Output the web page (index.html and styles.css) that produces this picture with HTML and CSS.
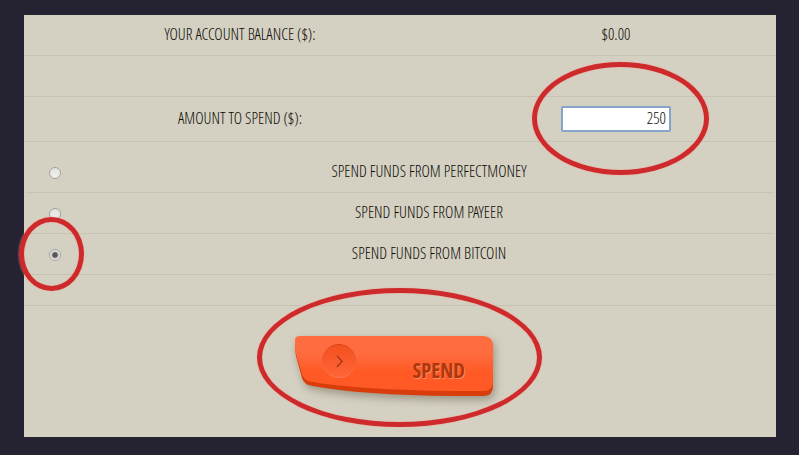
FILE: index.html
```
<!DOCTYPE html>
<html lang="en">
<head>
  <meta charset="UTF-8">
  <meta name="viewport" content="width=device-width, initial-scale=1.0">
  <title>Make a Spend</title>
  <link rel="stylesheet" href="styles.css">
</head>
<body>
  <form class="deposit">
    <!-- Balance and amount -->
    <div class="row">
      <span class="cell-label">Your account balance ($):</span>
      <span class="cell-value">$0.00</span>
    </div>
    <div class="row"></div>
    <div class="row row-amount">
      <label class="cell-label" for="amount">Amount to spend ($):</label>
      <div class="cell-value">
        <div class="amount-box">
          <input type="text" id="amount" name="amount" class="amount-input" value="250">
          <span class="ring ring-amount"></span>
        </div>
      </div>
    </div>

    <!-- Payment source -->
    <div class="sources">
      <div class="row">
        <div class="cell-radio"><input type="radio" class="radio" id="perfectmoney" name="source"></div>
        <label class="cell-source" for="perfectmoney">Spend funds from PerfectMoney</label>
      </div>
      <div class="row">
        <div class="cell-radio"><input type="radio" class="radio" id="payeer" name="source"></div>
        <label class="cell-source" for="payeer">Spend funds from Payeer</label>
      </div>
      <div class="row">
        <div class="cell-radio">
          <div class="radio-box">
            <input type="radio" class="radio" id="bitcoin" name="source" checked>
            <span class="ring ring-radio"></span>
          </div>
        </div>
        <label class="cell-source" for="bitcoin">Spend funds from Bitcoin</label>
      </div>
    </div>
    <div class="row row-short"></div>

    <div class="actions">
      <div class="submit-box">
        <button type="submit" class="submit">
          <svg class="submit-shape" viewBox="0 0 198 60" aria-hidden="true">
            <defs>
              <linearGradient id="face" x1="0" y1="0" x2="0" y2="1">
                <stop offset="0" stop-color="#ff6c40"/>
                <stop offset="0.3" stop-color="#ff6c40"/>
                <stop offset="0.65" stop-color="#ff5a26"/>
                <stop offset="1" stop-color="#ff5a26"/>
              </linearGradient>
              <linearGradient id="dial" x1="0" y1="0" x2="0" y2="1">
                <stop offset="0" stop-color="#f5501f"/>
                <stop offset="1" stop-color="#ff6538"/>
              </linearGradient>
              <linearGradient id="rim" x1="0" y1="0" x2="0" y2="1">
                <stop offset="0" stop-color="#d94314"/>
                <stop offset="1" stop-color="#ff7850"/>
              </linearGradient>
            </defs>
            <path fill="#d93d0c" d="M0 8 Q0 5 5 5 H190 Q198 5 198 13 V50 Q198 60 188 60 H160 Q65 59 18 50 Q9 49 7 42 L1 20 Q0 14 0 8Z"/>
            <path fill="url(#face)" d="M0 4 Q0 0 5 0 H188 Q198 0 198 10 V45 Q198 55 188 55 H160 Q65 54 18 46 Q9 45 7 38 L1 18 Q0 14 0 9Z"/>
            <circle cx="44" cy="25" r="16.5" fill="url(#dial)" stroke="url(#rim)"/>
            <path d="M42 21 L47 26 L42 31" fill="none" stroke="#ff7d56" stroke-width="1.5"/>
            <path d="M42 20 L47 25.500 L42 31" fill="none" stroke="#a9330c" stroke-width="1.5"/>
          </svg>
          <span class="submit-text">Spend</span>
        </button>
        <span class="ring ring-submit"></span>
      </div>
    </div>
  </form>
</body>
</html>
```
FILE: styles.css
```
* {
  box-sizing: border-box;
}

body {
  margin: 0;
  padding: 15px 23px 18px 24px;
  background: #252331;
  color: #0c0b06;
  font-family: "Open Sans Condensed Light", "Open Sans Condensed", "Roboto Condensed", sans-serif;
  font-size: 16px;
  font-weight: 300;
  line-height: 20px;
}

.deposit {
  background: #d5d1c2;
  text-transform: uppercase;
  padding-bottom: 41px;
}

.row {
  display: flex;
  align-items: center;
  min-height: 41px;
  padding-bottom: 2px;
  border-bottom: 1px solid #c8c4b5;
}

.row-amount {
  min-height: 45px;
}

.row-short {
  min-height: 31px;
}

.cell-label,
.cell-value,
.cell-source {
  text-align: center;
}

.cell-label {
  flex: 27;
}

.cell-value {
  flex: 20;
}

.sources {
  padding: 10px 2px 0;
}

.cell-radio {
  display: flex;
  justify-content: center;
  width: 58px;
}

.cell-source {
  flex: 1;
}

.amount-box,
.radio-box,
.submit-box {
  display: inline-block;
  position: relative;
  vertical-align: middle;
}

.amount-box {
  margin-top: 2px;
}

.amount-input {
  display: block;
  width: 110px;
  height: 26px;
  padding: 0 3px 2px;
  border: 2px solid #86a5c8;
  border-radius: 2px;
  background: #fff;
  color: inherit;
  font: inherit;
  text-align: right;
  outline: none;
}

.radio {
  appearance: none;
  display: block;
  width: 12px;
  height: 12px;
  margin: 4px 0 0;
  border: 1px solid #a3a19a;
  border-radius: 50%;
  background: linear-gradient(#e2e2e0, #f0f0ee);
}

.radio:checked {
  background: radial-gradient(circle, #55555a 0, #55555a 2px, #e8e8e6 4px);
}

.actions {
  padding-top: 30px;
  text-align: center;
}

.submit-box {
  margin-right: 12px;
}

.submit {
  display: flex;
  justify-content: flex-end;
  align-items: center;
  position: relative;
  width: 198px;
  height: 60px;
  padding: 8px 28px 0 0;
  border: 0;
  background: none;
  color: #b0360c;
  font: bold 21px/24px "Open Sans Condensed", "Roboto Condensed", sans-serif;
  text-transform: uppercase;
  cursor: pointer;
}

.submit-shape {
  position: absolute;
  inset: 0;
  overflow: visible;
  filter: drop-shadow(2px 4px 4px rgba(70, 60, 40, 0.4));
}

.submit-text {
  position: relative;
  text-shadow: 1px 1px 0 #ff8c66;
}

/* red marker rings */
.ring {
  position: absolute;
  border: 5px solid #cf2a2b;
  border-radius: 50%;
  box-shadow: 0 0 2px #eba9a0, inset 0 0 2px #eba9a0;
  pointer-events: none;
}

.ring-amount {
  inset: -44px -38px -43px -29px;
}

.ring-radio {
  inset: -28px -23px -30px -30px;
}

.ring-submit {
  inset: -48px -49px -31px -38px;
}
```
